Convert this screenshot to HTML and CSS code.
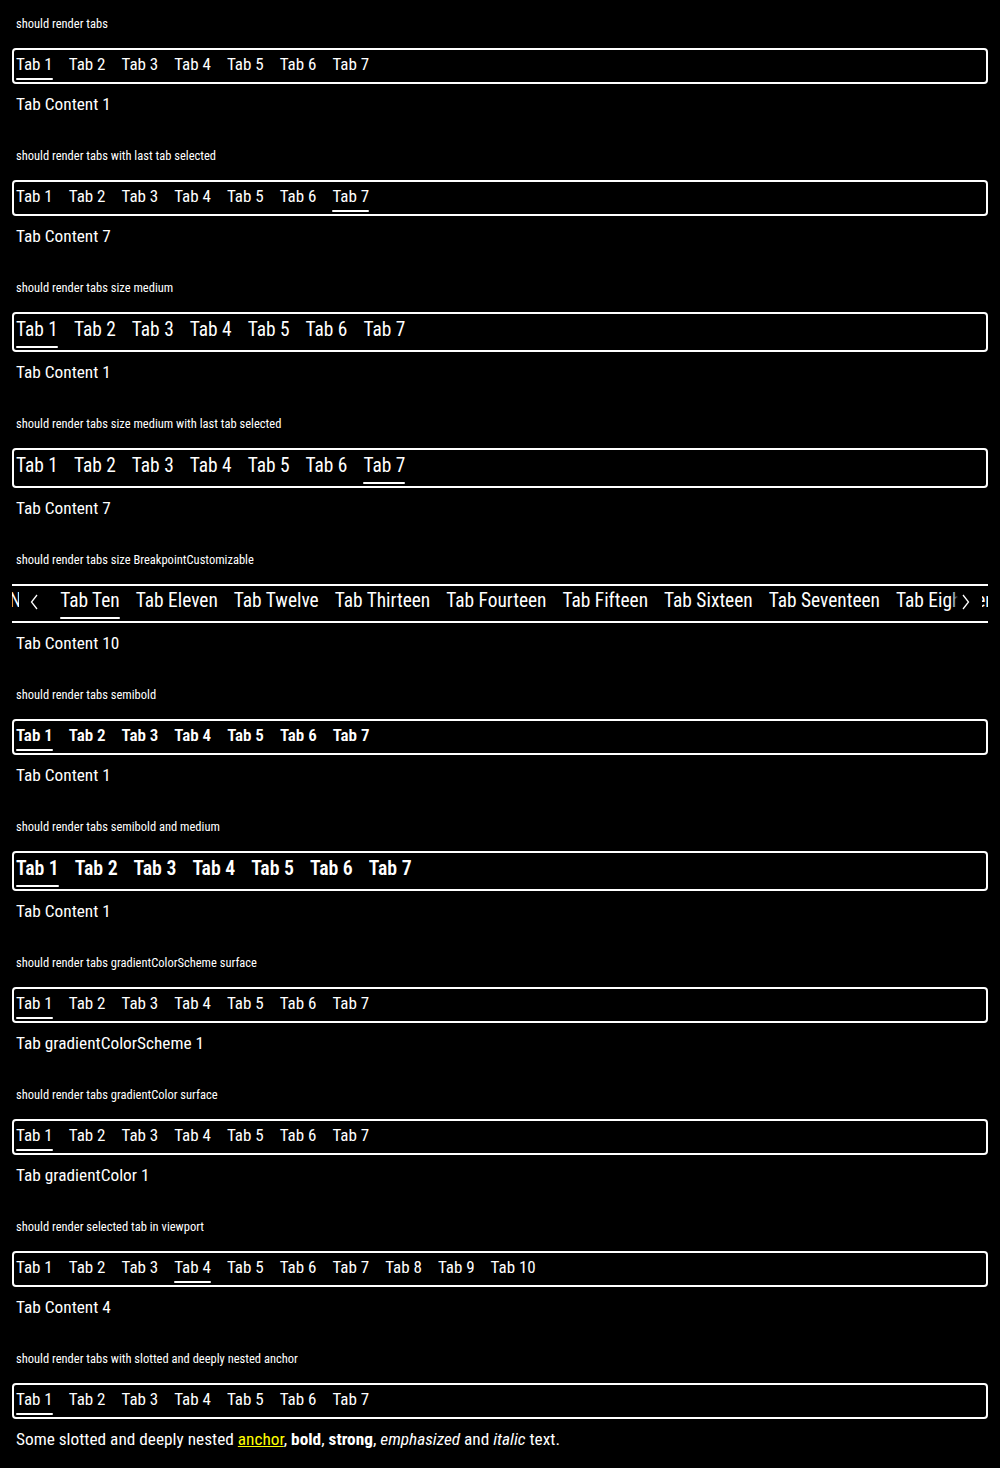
FILE: index.html
```html
<!DOCTYPE html>
<html lang="en">
<head>
<meta charset="utf-8">
<title>Tabs</title>
<link rel="stylesheet" href="styles.css">
</head>
<body>
<main class="page">

<section class="case">
  <p class="label">should render tabs</p>
  <div class="frame">
    <div class="tabs">
      <span class="tab is-active">Tab 1</span><span class="tab">Tab 2</span><span class="tab">Tab 3</span><span class="tab">Tab 4</span><span class="tab">Tab 5</span><span class="tab">Tab 6</span><span class="tab">Tab 7</span>
    </div>
  </div>
  <p class="content">Tab Content 1</p>
</section>

<section class="case">
  <p class="label">should render tabs with last tab selected</p>
  <div class="frame">
    <div class="tabs">
      <span class="tab">Tab 1</span><span class="tab">Tab 2</span><span class="tab">Tab 3</span><span class="tab">Tab 4</span><span class="tab">Tab 5</span><span class="tab">Tab 6</span><span class="tab is-active">Tab 7</span>
    </div>
  </div>
  <p class="content">Tab Content 7</p>
</section>

<section class="case">
  <p class="label">should render tabs size medium</p>
  <div class="frame">
    <div class="tabs tabs--medium">
      <span class="tab is-active">Tab 1</span><span class="tab">Tab 2</span><span class="tab">Tab 3</span><span class="tab">Tab 4</span><span class="tab">Tab 5</span><span class="tab">Tab 6</span><span class="tab">Tab 7</span>
    </div>
  </div>
  <p class="content">Tab Content 1</p>
</section>

<section class="case">
  <p class="label">should render tabs size medium with last tab selected</p>
  <div class="frame">
    <div class="tabs tabs--medium">
      <span class="tab">Tab 1</span><span class="tab">Tab 2</span><span class="tab">Tab 3</span><span class="tab">Tab 4</span><span class="tab">Tab 5</span><span class="tab">Tab 6</span><span class="tab is-active">Tab 7</span>
    </div>
  </div>
  <p class="content">Tab Content 7</p>
</section>

<section class="case">
  <p class="label">should render tabs size BreakpointCustomizable</p>
  <div class="scroll-frame">
    <div class="scroller">
      <div class="tabs tabs--medium">
        <span class="tab">Tab One</span><span class="tab">Tab Two</span><span class="tab">Tab Three</span><span class="tab">Tab Four</span><span class="tab">Tab Five</span><span class="tab">Tab Six</span><span class="tab">Tab Seven</span><span class="tab">Tab Eight</span><span class="tab">Tab Nine</span><span class="tab is-active">Tab Ten</span><span class="tab">Tab Eleven</span><span class="tab">Tab Twelve</span><span class="tab">Tab Thirteen</span><span class="tab">Tab Fourteen</span><span class="tab">Tab Fifteen</span><span class="tab">Tab Sixteen</span><span class="tab">Tab Seventeen</span><span class="tab">Tab Eighteen</span><span class="tab">Tab Nineteen</span><span class="tab">Tab Twenty</span>
      </div>
    </div>
    <span class="scroll-btn scroll-btn--prev"><svg width="8" height="16" viewBox="0 0 8 16"><path d="M7 1 L1.5 8 L7 15" fill="none" stroke="#fff" stroke-width="1.3"/></svg></span>
    <span class="scroll-btn scroll-btn--next"><svg width="8" height="16" viewBox="0 0 8 16"><path d="M1 1 L6.5 8 L1 15" fill="none" stroke="#fff" stroke-width="1.3"/></svg></span>
  </div>
  <p class="content">Tab Content 10</p>
</section>

<section class="case">
  <p class="label">should render tabs semibold</p>
  <div class="frame">
    <div class="tabs tabs--semibold">
      <span class="tab is-active">Tab 1</span><span class="tab">Tab 2</span><span class="tab">Tab 3</span><span class="tab">Tab 4</span><span class="tab">Tab 5</span><span class="tab">Tab 6</span><span class="tab">Tab 7</span>
    </div>
  </div>
  <p class="content">Tab Content 1</p>
</section>

<section class="case">
  <p class="label">should render tabs semibold and medium</p>
  <div class="frame">
    <div class="tabs tabs--medium tabs--semibold">
      <span class="tab is-active">Tab 1</span><span class="tab">Tab 2</span><span class="tab">Tab 3</span><span class="tab">Tab 4</span><span class="tab">Tab 5</span><span class="tab">Tab 6</span><span class="tab">Tab 7</span>
    </div>
  </div>
  <p class="content">Tab Content 1</p>
</section>

<section class="case">
  <p class="label">should render tabs gradientColorScheme surface</p>
  <div class="frame">
    <div class="tabs">
      <span class="tab is-active">Tab 1</span><span class="tab">Tab 2</span><span class="tab">Tab 3</span><span class="tab">Tab 4</span><span class="tab">Tab 5</span><span class="tab">Tab 6</span><span class="tab">Tab 7</span>
    </div>
  </div>
  <p class="content">Tab gradientColorScheme 1</p>
</section>

<section class="case">
  <p class="label">should render tabs gradientColor surface</p>
  <div class="frame">
    <div class="tabs">
      <span class="tab is-active">Tab 1</span><span class="tab">Tab 2</span><span class="tab">Tab 3</span><span class="tab">Tab 4</span><span class="tab">Tab 5</span><span class="tab">Tab 6</span><span class="tab">Tab 7</span>
    </div>
  </div>
  <p class="content">Tab gradientColor 1</p>
</section>

<section class="case">
  <p class="label">should render selected tab in viewport</p>
  <div class="frame">
    <div class="tabs">
      <span class="tab">Tab 1</span><span class="tab">Tab 2</span><span class="tab">Tab 3</span><span class="tab is-active">Tab 4</span><span class="tab">Tab 5</span><span class="tab">Tab 6</span><span class="tab">Tab 7</span><span class="tab">Tab 8</span><span class="tab">Tab 9</span><span class="tab">Tab 10</span>
    </div>
  </div>
  <p class="content">Tab Content 4</p>
</section>

<section class="case">
  <p class="label">should render tabs with slotted and deeply nested anchor</p>
  <div class="frame">
    <div class="tabs">
      <span class="tab is-active">Tab 1</span><span class="tab">Tab 2</span><span class="tab">Tab 3</span><span class="tab">Tab 4</span><span class="tab">Tab 5</span><span class="tab">Tab 6</span><span class="tab">Tab 7</span>
    </div>
  </div>
  <p class="content">Some slotted and deeply nested <a class="anchor" href="#">anchor</a>, <b>bold</b>, <strong>strong</strong>, <em>emphasized</em> and <i>italic</i> text.</p>
</section>

</main>
<script src="script.js"></script>
</body>
</html>
```

FILE: styles.css
```css
* { box-sizing: border-box; }

body {
  margin: 0;
  background: #000;
  color: #fff;
  font-family: "Roboto Condensed", Roboto, "Liberation Sans", sans-serif;
}

.page {
  padding: 16px 12px 0;
}

.case {
  margin-bottom: 32px;
}

.label {
  margin: 0 4px 16px;
  font-size: 12.5px;
  line-height: 16px;
}

.frame {
  border: 2px solid #fff;
  border-radius: 4px;
  padding: 2px;
}

.tabs {
  display: flex;
  gap: 16px;
  height: 28px;
}

.tab {
  position: relative;
  font-size: 17px;
  line-height: 25px;
  white-space: nowrap;
  flex: none;
}

.tab.is-active::after {
  content: "";
  position: absolute;
  left: 0;
  right: 0;
  bottom: 0;
  height: 2px;
  background: #fff;
  border-radius: 1px;
}

.tabs--medium {
  height: 32px;
}

.tabs--medium .tab {
  font-size: 19.4px;
  line-height: 27px;
}

.tabs--semibold .tab {
  font-weight: 600;
}

.tabs--medium.tabs--semibold .tab {
  font-size: 19.8px;
}

.content {
  margin: 8px 4px 0;
  font-size: 17.3px;
  line-height: 24px;
}

.anchor {
  color: #ffff00;
  text-decoration: underline;
}

/* scrolling variant */
.scroll-frame {
  position: relative;
  border-top: 2px solid #fff;
  border-bottom: 2px solid #fff;
  overflow: hidden;
}

.scroller {
  overflow-x: auto;
  scrollbar-width: none;
  padding: 1px 0 2px;
}

.scroller::-webkit-scrollbar { display: none; }

.scroll-btn {
  position: absolute;
  top: 0;
  bottom: 0;
  display: flex;
  align-items: center;
  padding-bottom: 4px;
  background: #000;
}

.scroll-btn--prev {
  left: 7px;
  width: 40px;
  padding-left: 11px;
  background: linear-gradient(to right, #000 72%, rgba(0, 0, 0, 0));
}

.scroll-btn--next {
  right: 6px;
  width: 30px;
  padding-left: 10px;
  background: linear-gradient(to left, #000 80%, rgba(0, 0, 0, 0));
}
```

FILE: script.js
```js
var scroller = document.querySelector('.scroller');
var active = scroller.querySelector('.is-active');
var offset = active.getBoundingClientRect().left - scroller.getBoundingClientRect().left;
scroller.scrollLeft = offset - 48;
```
